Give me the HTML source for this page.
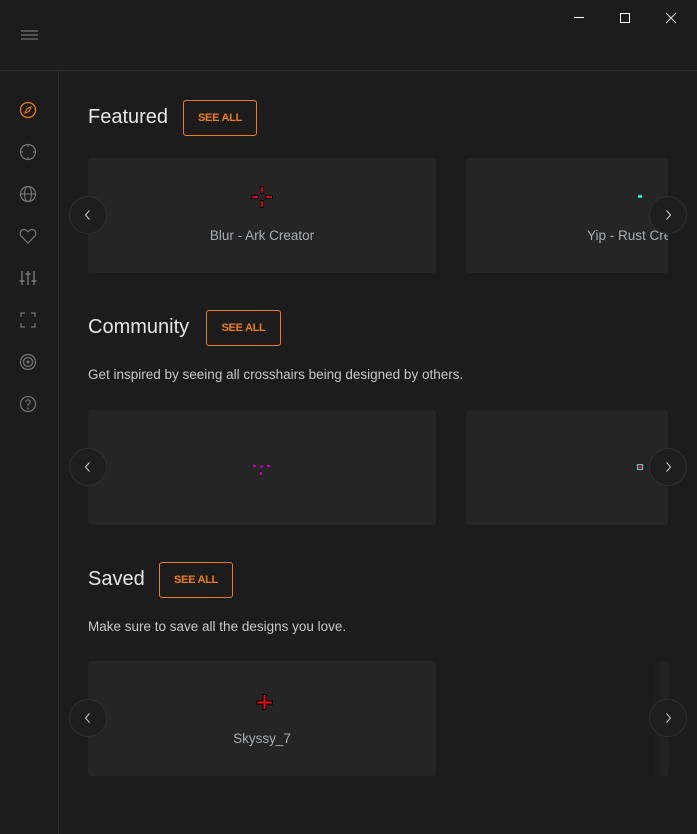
<!DOCTYPE html>
<html><head><meta charset="utf-8"><style>
*{margin:0;padding:0;box-sizing:border-box}
body{width:697px;height:834px;background:#1c1c1c;font-family:"Liberation Sans",sans-serif;position:relative;overflow:hidden;color:#ddd}
.abs{position:absolute}
.hline{left:0;top:70px;width:697px;height:1px;background:#2e2e2e}
.vline{left:58px;top:71px;width:1px;height:763px;background:#2e2e2e}
.title{position:absolute;font-size:20px;color:#e6e6e6}
.btn{position:absolute;height:36px;border:1px solid #f07c14;border-radius:3px;color:#f07c14;font-size:11px;font-weight:bold;display:flex;align-items:center;justify-content:center;letter-spacing:-0.3px}
.desc{position:absolute;left:88px;font-size:13.5px;color:#c8c8c8}
.card{position:absolute;background:#252525;border-radius:3px}
.lbl{position:absolute;width:100%;text-align:center;font-size:13.5px;color:#a9adb3}
.arr{position:absolute;width:38px;height:38px;border-radius:50%;background:#1e1e1e;border:1px solid #2e2e2e;display:flex;align-items:center;justify-content:center}
.ic{position:absolute;left:18px}
</style></head><body>
<div class="abs hline"></div><div class="abs vline"></div>
<svg class="abs" style="left:21px;top:30px" width="18" height="10"><path d="M0 1h17M0 5h17M0 9h17" stroke="#8a8a8a" stroke-width="1"/></svg>
<svg class="abs" style="left:570px;top:8px" width="115" height="20"><path d="M4 9.5h10" stroke="#fff"/><path d="M50.5 5.5h9v9h-9z" stroke="#fff" fill="none"/><path d="M96 5l10 10M106 5l-10 10" stroke="#ddd"/></svg>
<svg class="ic" style="top:100px" width="20" height="20"><circle cx="10" cy="10" r="7.5" stroke="#f07c14" stroke-width="1.3" fill="none"/><path d="M13 7l-4 1.5-2 4.5 4-1.5z" stroke="#f07c14" stroke-width="1.1" fill="none"/></svg>
<svg class="ic" style="top:142px" width="20" height="20"><circle cx="10" cy="10" r="7.5" stroke="#777" stroke-width="1.2" fill="none"/><path d="M10 2v3M10 15v3M2 10h3M15 10h3" stroke="#777" stroke-width="1.2"/></svg>
<svg class="ic" style="top:184px" width="20" height="20"><circle cx="10" cy="10" r="7.5" stroke="#777" stroke-width="1.2" fill="none"/><ellipse cx="10" cy="10" rx="3.5" ry="7.5" stroke="#777" stroke-width="1.1" fill="none"/><path d="M2.5 10h15" stroke="#777" stroke-width="1.1"/></svg>
<svg class="ic" style="top:226px" width="20" height="20"><path d="M10 17L3.5 10.5C1 8 2.5 3.5 6 3.5c2 0 3 1.2 4 2.4 1-1.2 2-2.4 4-2.4 3.5 0 5 4.5 2.5 7z" stroke="#777" stroke-width="1.2" fill="none"/></svg>
<svg class="ic" style="top:268px" width="20" height="20"><path d="M4 3v14M10 3v14M16 3v14M1.5 13h5M7.5 6h5M13.5 13h5" stroke="#777" stroke-width="1.4"/></svg>
<svg class="ic" style="top:310px" width="20" height="20"><path d="M3 7V3h4M13 3h4v4M17 13v4h-4M7 17H3v-4" stroke="#777" stroke-width="1.2" fill="none"/></svg>
<svg class="ic" style="top:352px" width="20" height="20"><circle cx="10" cy="10" r="7.5" stroke="#777" stroke-width="1.2" fill="none"/><circle cx="10" cy="10" r="4.5" stroke="#777" stroke-width="1.2" fill="none"/><circle cx="10" cy="10" r="1.5" fill="#777"/></svg>
<svg class="ic" style="top:394px" width="20" height="20"><circle cx="10" cy="10" r="7.5" stroke="#777" stroke-width="1.2" fill="none"/><path d="M7.8 8a2.2 2.2 0 1 1 2.2 2.2v1.6" stroke="#777" stroke-width="1.2" fill="none"/><circle cx="10" cy="14.3" r="0.9" fill="#777"/></svg>

<div class="title" style="left:88px;top:106px">Featured</div>
<div class="btn" style="left:183px;top:100px;width:74px">SEE ALL</div>
<div class="card" style="left:88px;top:158px;width:348px;height:115px"><div class="lbl" style="top:70px">Blur - Ark Creator</div>
<svg class="abs" style="left:162px;top:27px" width="24" height="24"><g fill="#e00000" stroke="#000" stroke-width="1"><rect x="10.5" y="1.5" width="3" height="7"/><rect x="10.5" y="15.5" width="3" height="7"/><rect x="1.5" y="10.5" width="7" height="3"/><rect x="15.5" y="10.5" width="7" height="3"/></g></svg></div>
<div class="card" style="left:466px;top:158px;width:202px;height:115px;overflow:hidden"><div class="abs" style="left:121px;top:70px;font-size:13.5px;color:#a9adb3;white-space:nowrap">Yip - Rust Creator</div><div class="abs" style="left:172px;top:37px;width:4px;height:3px;background:#2fe0c0"></div></div>
<div class="arr" style="left:69px;top:196px"><svg width="10" height="12"><path d="M6.5 1.5L2.5 6l4 4.5" stroke="#ccc" fill="none"/></svg></div>
<div class="arr" style="left:649px;top:196px"><svg width="10" height="12"><path d="M3.5 1.5L7.5 6l-4 4.5" stroke="#ccc" fill="none"/></svg></div>

<div class="title" style="left:88px;top:316px">Community</div>
<div class="btn" style="left:206px;top:310px;width:75px">SEE ALL</div>
<div class="desc" style="top:367px">Get inspired by seeing all crosshairs being designed by others.</div>
<div class="card" style="left:88px;top:410px;width:348px;height:115px"><svg class="abs" style="left:164px;top:54px" width="20" height="14"><g fill="#c400c4"><rect x="1" y="1" width="3" height="2"/><rect x="8" y="1" width="3" height="3" fill="#a000a8"/><rect x="15" y="1" width="3" height="2"/><rect x="8" y="8" width="2" height="3"/></g></svg></div>
<div class="card" style="left:466px;top:410px;width:202px;height:115px"><div class="abs" style="left:171px;top:54px;width:6px;height:6px;border:1px solid #2fe0e0;background:#c00020"></div></div>
<div class="arr" style="left:69px;top:448px"><svg width="10" height="12"><path d="M6.5 1.5L2.5 6l4 4.5" stroke="#ccc" fill="none"/></svg></div>
<div class="arr" style="left:649px;top:448px"><svg width="10" height="12"><path d="M3.5 1.5L7.5 6l-4 4.5" stroke="#ccc" fill="none"/></svg></div>

<div class="title" style="left:88px;top:568px">Saved</div>
<div class="btn" style="left:159px;top:562px;width:74px">SEE ALL</div>
<div class="desc" style="top:619px">Make sure to save all the designs you love.</div>
<div class="card" style="left:88px;top:661px;width:348px;height:115px"><div class="lbl" style="top:70px">Skyssy_7</div>
<svg class="abs" style="left:166px;top:31px" width="20" height="20"><path d="M10.5 2v16M2 10.5h17" stroke="#000" stroke-width="4"/><path d="M10.5 3v14M3 10.5h15" stroke="#f00010" stroke-width="2"/></svg></div>
<div class="card" style="left:652px;top:661px;width:16px;height:115px;background:linear-gradient(90deg,#1c1c1c,#242424)"></div>
<div class="arr" style="left:69px;top:699px"><svg width="10" height="12"><path d="M6.5 1.5L2.5 6l4 4.5" stroke="#ccc" fill="none"/></svg></div>
<div class="arr" style="left:649px;top:699px"><svg width="10" height="12"><path d="M3.5 1.5L7.5 6l-4 4.5" stroke="#ccc" fill="none"/></svg></div>
</body></html>
